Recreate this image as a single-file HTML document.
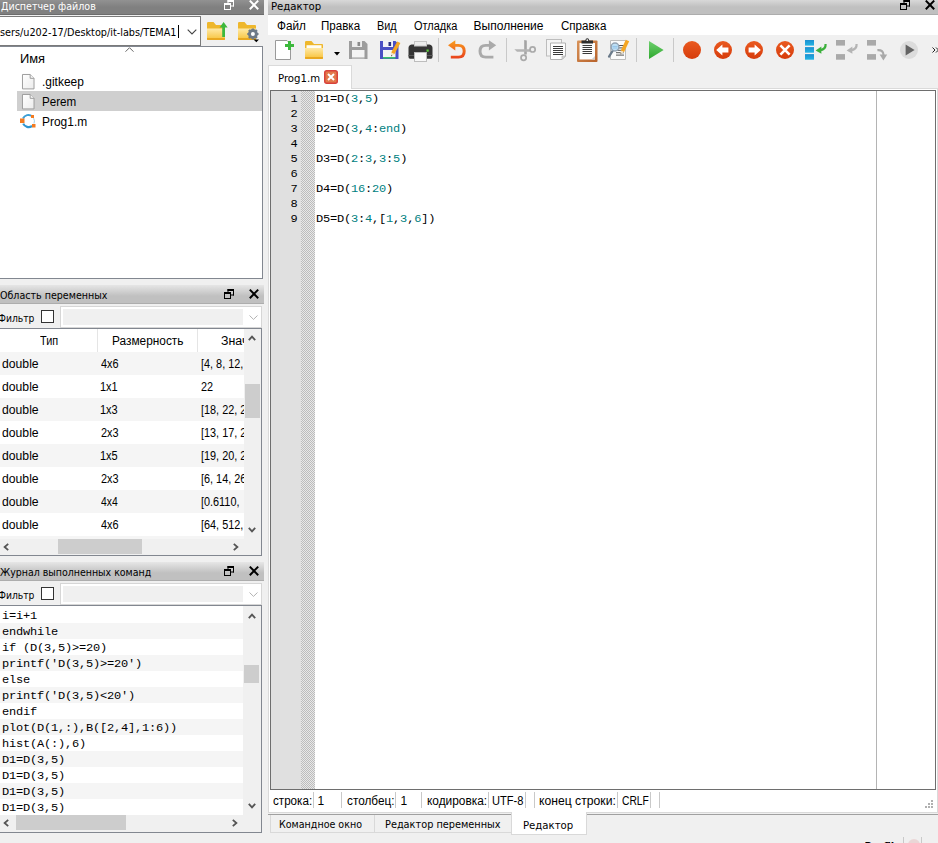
<!DOCTYPE html>
<html><head><meta charset="utf-8"><title>Octave</title>
<style>
*{box-sizing:border-box;margin:0;padding:0}
html,body{width:938px;height:843px;overflow:hidden;background:#f0f0f0}
body{position:relative;font-family:"DejaVu Sans Condensed","Liberation Sans",sans-serif;font-size:11px;color:#000}
.a{position:absolute}
.t{position:absolute;white-space:nowrap;line-height:15px;height:15px}
.s{position:absolute;white-space:nowrap;line-height:16px;height:16px;font-family:"Liberation Sans","DejaVu Sans",sans-serif;font-size:12px}
.m{position:absolute;white-space:pre;line-height:16px;height:16px;font-family:"Liberation Mono","DejaVu Sans Mono",monospace;font-size:12px;letter-spacing:-0.2px;transform:scaleY(0.84);transform-origin:0 11px}
.tbar{position:absolute;height:19px;background:linear-gradient(#e6e6e6 0,#c0c0c0 11px,#c0c0c0 18px,#adadad 18px)}
.tbar.act{background:linear-gradient(#9c9c9c 0,#808080 11px,#808080 18px,#6c6c6c 18px)}
.frame{position:absolute;border:1px solid #828790;background:#fff}
.n{color:#007f7f}
.sep{position:absolute;width:1px;background:#c9c9c9}
svg{position:absolute;overflow:visible}
</style></head><body>

<div class="tbar act" style="left:0;top:-4px;width:264px"></div>
<div class="t" style="left:0.70px;top:-1px;transform:scaleX(0.9622);transform-origin:0 0;color:#fff;">Диспетчер файлов</div>
<svg style="left:224px;top:0px" width="10" height="10" viewBox="0 0 10 10"><g fill="#fff"><rect x="3.5" y="0" width="6.5" height="2"/><rect x="9" y="0" width="1" height="6.5"/><rect x="7" y="5.5" width="3" height="1"/><rect x="3.5" y="0" width="1" height="3"/><rect x="0" y="3" width="7" height="2"/><rect x="0" y="3" width="1" height="7"/><rect x="6" y="3" width="1" height="7"/><rect x="0" y="9" width="7" height="1"/></g></svg>
<svg style="left:249px;top:0px" width="10" height="10" viewBox="0 0 10 10"><path d="M0.8 0.6L9.2 9.2M9.2 0.6L0.8 9.2" fill="none" stroke="#fff" stroke-width="2"/></svg>
<div class="frame" style="left:-2px;top:16px;width:203px;height:30px;border-color:#7a7a7a"></div>
<div class="t" style="left:0.30px;top:25px;transform:scaleX(0.9789);transform-origin:0 0;">sers/u202-17/Desktop/it-labs/TEMA1</div>
<div class="a" style="left:178px;top:25px;width:1px;height:13px;background:#000"></div>
<svg style="left:187px;top:29px" width="10" height="6" viewBox="0 0 10 6"><path d="M0.7 0.7L5 5L9.3 0.7" fill="none" stroke="#444" stroke-width="1.1"/></svg>
<div class="frame" style="left:-1px;top:46px;width:264px;height:233px"></div>
<svg style="left:125px;top:47px" width="9" height="5" viewBox="0 0 9 5"><path d="M0.5 4.7L4.5 0.7L8.5 4.7" fill="none" stroke="#666" stroke-width="1"/></svg>
<div class="s" style="left:20.13px;top:51px;transform:scaleX(1.0727);transform-origin:0 0;">Имя</div>
<div class="a" style="left:17px;top:91px;width:245px;height:20px;background:#cfcfcf"></div>
<svg style="left:22px;top:73.6px" width="12.5" height="15.4" viewBox="0 0 13 16"><defs><linearGradient id="fg1" x1="0" y1="0" x2="1" y2="1"><stop offset="0" stop-color="#fff"/><stop offset="1" stop-color="#ececec"/></linearGradient></defs><path d="M0.5 0.5H8.5L12.5 4.5V15.5H0.5Z" fill="url(#fg1)" stroke="#9b9b9b"/><path d="M8.5 0.5V4.5H12.5" fill="#f4f4f4" stroke="#9b9b9b"/></svg>
<svg style="left:22px;top:93.6px" width="12.5" height="15.4" viewBox="0 0 13 16"><defs><linearGradient id="fg2" x1="0" y1="0" x2="1" y2="1"><stop offset="0" stop-color="#fff"/><stop offset="1" stop-color="#ececec"/></linearGradient></defs><path d="M0.5 0.5H8.5L12.5 4.5V15.5H0.5Z" fill="url(#fg2)" stroke="#9b9b9b"/><path d="M8.5 0.5V4.5H12.5" fill="#f4f4f4" stroke="#9b9b9b"/></svg>
<svg style="left:20px;top:113px" width="16" height="16" viewBox="0 0 16 16"><path d="M12.2 3.2A6 6 0 0 0 3 5.5" fill="none" stroke="#3b9fd6" stroke-width="2"/><path d="M3.2 10.6A6 6 0 0 0 12 13" fill="none" stroke="#2f96d0" stroke-width="2.2"/><path d="M13.6 5.2A6 6 0 0 1 14 10.5" fill="none" stroke="#9fd0ea" stroke-width="1"/><rect x="0" y="5.5" width="4.5" height="4.5" fill="#f47b20"/><rect x="11" y="2" width="3" height="3" fill="#f47b20"/><rect x="12" y="11" width="3.5" height="3.5" fill="#f47b20"/></svg>
<div class="s" style="left:41.60px;top:74px;transform:scaleX(0.9951);transform-origin:0 0;">.gitkeep</div>
<div class="s" style="left:41.63px;top:94px;transform:scaleX(0.9706);transform-origin:0 0;">Perem</div>
<div class="s" style="left:41.60px;top:114px;transform:scaleX(0.9955);transform-origin:0 0;">Prog1.m</div>
<svg style="left:207px;top:22px" width="22" height="18" viewBox="0 0 22 18"><defs><linearGradient id="fo" x1="0" y1="0" x2="0" y2="1"><stop offset="0" stop-color="#ffe9a6"/><stop offset="1" stop-color="#f8c94c"/></linearGradient></defs><path d="M0 1.2Q0 0 1.2 0H6.5L9 3H17Q18 3 18 4V17Q18 18 17 18H1Q0 18 0 17Z" fill="#eeb72c"/><path d="M0 6.5H18V16H0Z" fill="url(#fo)"/><path d="M0 16H18V17Q18 18 17 18H1Q0 18 0 17Z" fill="#e9a820"/><path d="M16.6 0L20.6 5.6H18V15H15.2V5.6H12.6Z" fill="#3db83d"/></svg>
<svg style="left:238px;top:22px" width="22" height="21" viewBox="0 0 22 21"><path d="M0 1.2Q0 0 1.2 0H6.5L9 3H17Q18 3 18 4V17Q18 18 17 18H1Q0 18 0 17Z" fill="#eeb72c"/><path d="M0 6.5H18V16H0Z" fill="url(#fo)"/><path d="M0 16H18V17Q18 18 17 18H1Q0 18 0 17Z" fill="#e9a820"/><g transform="translate(14.9,12)"><circle r="3.6" fill="none" stroke="#6d7987" stroke-width="2.6"/><g stroke="#6d7987" stroke-width="2.2"><path d="M0 -5.6V5.6M-5.6 0H5.6M-4 -4L4 4M-4 4L4 -4"/></g><circle r="2" fill="#fff"/></g><path d="M15.6 17.4H21L18.3 20.3Z" fill="#000"/></svg>
<div class="tbar" style="left:0;top:285px;width:264px"></div>
<div class="t" style="left:0.30px;top:287.6px;transform:scaleX(0.9622);transform-origin:0 0;">Область переменных</div>
<svg style="left:224px;top:289px" width="10" height="10" viewBox="0 0 10 10"><g fill="#000"><rect x="3.5" y="0" width="6.5" height="2"/><rect x="9" y="0" width="1" height="6.5"/><rect x="7" y="5.5" width="3" height="1"/><rect x="3.5" y="0" width="1" height="3"/><rect x="0" y="3" width="7" height="2"/><rect x="0" y="3" width="1" height="7"/><rect x="6" y="3" width="1" height="7"/><rect x="0" y="9" width="7" height="1"/></g></svg>
<svg style="left:249px;top:289px" width="10" height="10" viewBox="0 0 10 10"><path d="M0.8 0.6L9.2 9.2M9.2 0.6L0.8 9.2" fill="none" stroke="#000" stroke-width="2"/></svg>
<div class="t" style="left:-2.00px;top:311.4px;transform:scaleX(0.9308);transform-origin:0 0;">Фильтр</div>
<div class="a" style="left:41px;top:310px;width:13px;height:13px;border:1px solid #333;background:#fff"></div>
<div class="a" style="left:60px;top:306px;width:202px;height:22px;background:#fff;border:1px solid #d6d6d6"></div>
<div class="a" style="left:63px;top:309px;width:180px;height:16px;background:#f0f0f0"></div>
<svg style="left:249px;top:315px" width="9" height="5" viewBox="0 0 9 5"><path d="M0.5 0.5L4.5 4.4L8.5 0.5" fill="none" stroke="#b4b4b4" stroke-width="1"/></svg>
<div class="frame" style="left:-1px;top:328px;width:263px;height:228px"></div>
<div class="a" style="left:97px;top:329px;width:1px;height:23px;background:#e5e5e5"></div>
<div class="a" style="left:197px;top:329px;width:1px;height:23px;background:#e5e5e5"></div>
<div class="s" style="left:39.50px;top:333px;transform:scaleX(0.9050);transform-origin:0 0;">Тип</div>
<div class="s" style="left:111.61px;top:333px;transform:scaleX(0.9887);transform-origin:0 0;">Размерность</div>
<div class="a" style="left:198px;top:329px;width:46px;height:23px;overflow:hidden"><div class="s" style="left:22.5px;top:4px;transform:scaleX(1.03);transform-origin:0 0">Значение</div></div>
<div class="a" style="left:0;top:352px;width:244px;height:23px;background:#f5f5f5"></div>
<div class="s" style="left:1.60px;top:356px;transform:scaleX(1.0167);transform-origin:0 0;">double</div>
<div class="s" style="left:101.30px;top:356px;transform:scaleX(0.9105);transform-origin:0 0;">4x6</div>
<div class="a" style="left:198px;top:352px;width:46px;height:23px;overflow:hidden"><div class="s" style="left:2.9px;top:4px;transform:scaleX(0.905);transform-origin:0 0">[4, 8, 12, 16</div></div>
<div class="s" style="left:1.60px;top:379px;transform:scaleX(1.0167);transform-origin:0 0;">double</div>
<div class="s" style="left:100.38px;top:379px;transform:scaleX(0.9167);transform-origin:0 0;">1x1</div>
<div class="a" style="left:198px;top:375px;width:46px;height:23px;overflow:hidden"><div class="s" style="left:2.9px;top:4px;transform:scaleX(0.905);transform-origin:0 0">22</div></div>
<div class="a" style="left:0;top:398px;width:244px;height:23px;background:#f5f5f5"></div>
<div class="s" style="left:1.60px;top:402px;transform:scaleX(1.0167);transform-origin:0 0;">double</div>
<div class="s" style="left:100.38px;top:402px;transform:scaleX(0.9167);transform-origin:0 0;">1x3</div>
<div class="a" style="left:198px;top:398px;width:46px;height:23px;overflow:hidden"><div class="s" style="left:2.9px;top:4px;transform:scaleX(0.905);transform-origin:0 0">[18, 22, 26]</div></div>
<div class="s" style="left:1.60px;top:425px;transform:scaleX(1.0167);transform-origin:0 0;">double</div>
<div class="s" style="left:101.30px;top:425px;transform:scaleX(0.9105);transform-origin:0 0;">2x3</div>
<div class="a" style="left:198px;top:421px;width:46px;height:23px;overflow:hidden"><div class="s" style="left:2.9px;top:4px;transform:scaleX(0.905);transform-origin:0 0">[13, 17, 21</div></div>
<div class="a" style="left:0;top:444px;width:244px;height:23px;background:#f5f5f5"></div>
<div class="s" style="left:1.60px;top:448px;transform:scaleX(1.0167);transform-origin:0 0;">double</div>
<div class="s" style="left:100.38px;top:448px;transform:scaleX(0.9167);transform-origin:0 0;">1x5</div>
<div class="a" style="left:198px;top:444px;width:46px;height:23px;overflow:hidden"><div class="s" style="left:2.9px;top:4px;transform:scaleX(0.905);transform-origin:0 0">[19, 20, 21</div></div>
<div class="s" style="left:1.60px;top:471px;transform:scaleX(1.0167);transform-origin:0 0;">double</div>
<div class="s" style="left:101.30px;top:471px;transform:scaleX(0.9105);transform-origin:0 0;">2x3</div>
<div class="a" style="left:198px;top:467px;width:46px;height:23px;overflow:hidden"><div class="s" style="left:2.9px;top:4px;transform:scaleX(0.905);transform-origin:0 0">[6, 14, 26</div></div>
<div class="a" style="left:0;top:490px;width:244px;height:23px;background:#f5f5f5"></div>
<div class="s" style="left:1.60px;top:494px;transform:scaleX(1.0167);transform-origin:0 0;">double</div>
<div class="s" style="left:101.30px;top:494px;transform:scaleX(0.8650);transform-origin:0 0;">4x4</div>
<div class="a" style="left:198px;top:490px;width:46px;height:23px;overflow:hidden"><div class="s" style="left:2.9px;top:4px;transform:scaleX(0.905);transform-origin:0 0">[0.6110,</div></div>
<div class="s" style="left:1.60px;top:517px;transform:scaleX(1.0167);transform-origin:0 0;">double</div>
<div class="s" style="left:101.30px;top:517px;transform:scaleX(0.9105);transform-origin:0 0;">4x6</div>
<div class="a" style="left:198px;top:513px;width:46px;height:23px;overflow:hidden"><div class="s" style="left:2.9px;top:4px;transform:scaleX(0.905);transform-origin:0 0">[64, 512,</div></div>
<div class="a" style="left:244px;top:329px;width:17px;height:210px;background:#f0f0f0"></div>
<div class="a" style="left:245px;top:384px;width:15px;height:34px;background:#cdcdcd"></div>
<svg style="left:248px;top:335px" width="8" height="6" viewBox="0 0 8 6"><path d="M0.8 5.2L4 1.6L7.2 5.2" fill="none" stroke="#555" stroke-width="1.8"/></svg>
<svg style="left:248px;top:527px" width="8" height="6" viewBox="0 0 8 6"><path d="M0.8 0.8L4 4.4L7.2 0.8" fill="none" stroke="#555" stroke-width="1.8"/></svg>
<div class="a" style="left:0;top:536px;width:244px;height:3px;background:#f5f5f5"></div><div class="a" style="left:0;top:539px;width:261px;height:16px;background:#f0f0f0"></div>
<div class="a" style="left:58px;top:539px;width:84px;height:15px;background:#cdcdcd"></div>
<svg style="left:3px;top:543px" width="6" height="8" viewBox="0 0 6 8"><path d="M5.2 0.8L1.6 4L5.2 7.2" fill="none" stroke="#555" stroke-width="1.8"/></svg>
<svg style="left:233px;top:543px" width="6" height="8" viewBox="0 0 6 8"><path d="M0.8 0.8L4.4 4L0.8 7.2" fill="none" stroke="#555" stroke-width="1.8"/></svg>
<div class="tbar" style="left:0;top:562px;width:264px"></div>
<div class="t" style="left:0.30px;top:564.6px;transform:scaleX(0.9541);transform-origin:0 0;">Журнал выполненных команд</div>
<svg style="left:224px;top:566px" width="10" height="10" viewBox="0 0 10 10"><g fill="#000"><rect x="3.5" y="0" width="6.5" height="2"/><rect x="9" y="0" width="1" height="6.5"/><rect x="7" y="5.5" width="3" height="1"/><rect x="3.5" y="0" width="1" height="3"/><rect x="0" y="3" width="7" height="2"/><rect x="0" y="3" width="1" height="7"/><rect x="6" y="3" width="1" height="7"/><rect x="0" y="9" width="7" height="1"/></g></svg>
<svg style="left:249px;top:566px" width="10" height="10" viewBox="0 0 10 10"><path d="M0.8 0.6L9.2 9.2M9.2 0.6L0.8 9.2" fill="none" stroke="#000" stroke-width="2"/></svg>
<div class="t" style="left:-2.00px;top:588.4px;transform:scaleX(0.9308);transform-origin:0 0;">Фильтр</div>
<div class="a" style="left:41px;top:587px;width:13px;height:13px;border:1px solid #333;background:#fff"></div>
<div class="a" style="left:60px;top:583px;width:202px;height:22px;background:#fff;border:1px solid #d6d6d6"></div>
<div class="a" style="left:63px;top:586px;width:180px;height:16px;background:#f0f0f0"></div>
<svg style="left:249px;top:592px" width="9" height="5" viewBox="0 0 9 5"><path d="M0.5 0.5L4.5 4.4L8.5 0.5" fill="none" stroke="#b4b4b4" stroke-width="1"/></svg>
<div class="frame" style="left:-1px;top:605px;width:263px;height:228px"></div>
<div class="m" style="left:2px;top:608px;">i=i+1</div>
<div class="a" style="left:0;top:623px;width:243px;height:16px;background:#f5f5f5"></div>
<div class="m" style="left:2px;top:624px;">endwhile</div>
<div class="m" style="left:2px;top:640px;">if (D(3,5)&gt;=20)</div>
<div class="a" style="left:0;top:655px;width:243px;height:16px;background:#f5f5f5"></div>
<div class="m" style="left:2px;top:656px;">printf('D(3,5)&gt;=20')</div>
<div class="m" style="left:2px;top:672px;">else</div>
<div class="a" style="left:0;top:687px;width:243px;height:16px;background:#f5f5f5"></div>
<div class="m" style="left:2px;top:688px;">printf('D(3,5)&lt;20')</div>
<div class="m" style="left:2px;top:704px;">endif</div>
<div class="a" style="left:0;top:719px;width:243px;height:16px;background:#f5f5f5"></div>
<div class="m" style="left:2px;top:720px;">plot(D(1,:),B([2,4],1:6))</div>
<div class="m" style="left:2px;top:736px;">hist(A(:),6)</div>
<div class="a" style="left:0;top:751px;width:243px;height:16px;background:#f5f5f5"></div>
<div class="m" style="left:2px;top:752px;">D1=D(3,5)</div>
<div class="m" style="left:2px;top:768px;">D1=D(3,5)</div>
<div class="a" style="left:0;top:783px;width:243px;height:16px;background:#f5f5f5"></div>
<div class="m" style="left:2px;top:784px;">D1=D(3,5)</div>
<div class="m" style="left:2px;top:800px;">D1=D(3,5)</div>
<div class="a" style="left:243px;top:606px;width:18px;height:209px;background:#f0f0f0"></div>
<div class="a" style="left:244px;top:665px;width:15px;height:18px;background:#cdcdcd"></div>
<svg style="left:248px;top:613px" width="8" height="6" viewBox="0 0 8 6"><path d="M0.8 5.2L4 1.6L7.2 5.2" fill="none" stroke="#555" stroke-width="1.8"/></svg>
<svg style="left:248px;top:803px" width="8" height="6" viewBox="0 0 8 6"><path d="M0.8 0.8L4 4.4L7.2 0.8" fill="none" stroke="#555" stroke-width="1.8"/></svg>
<div class="a" style="left:0;top:815px;width:261px;height:17px;background:#f0f0f0"></div>
<div class="a" style="left:16px;top:815px;width:110px;height:15px;background:#cdcdcd"></div>
<svg style="left:3px;top:819px" width="6" height="8" viewBox="0 0 6 8"><path d="M5.2 0.8L1.6 4L5.2 7.2" fill="none" stroke="#555" stroke-width="1.8"/></svg>
<svg style="left:232px;top:819px" width="6" height="8" viewBox="0 0 6 8"><path d="M0.8 0.8L4.4 4L0.8 7.2" fill="none" stroke="#555" stroke-width="1.8"/></svg>
<div class="tbar" style="left:268px;top:-4px;width:670px"></div>
<div class="t" style="left:271.38px;top:-1px;transform:scaleX(1.0250);transform-origin:0 0;">Редактор</div>
<svg style="left:900px;top:0px" width="10" height="10" viewBox="0 0 10 10"><g fill="#000"><rect x="3.5" y="0" width="6.5" height="2"/><rect x="9" y="0" width="1" height="6.5"/><rect x="7" y="5.5" width="3" height="1"/><rect x="3.5" y="0" width="1" height="3"/><rect x="0" y="3" width="7" height="2"/><rect x="0" y="3" width="1" height="7"/><rect x="6" y="3" width="1" height="7"/><rect x="0" y="9" width="7" height="1"/></g></svg>
<svg style="left:925px;top:0px" width="10" height="10" viewBox="0 0 10 10"><path d="M0.8 0.6L9.2 9.2M9.2 0.6L0.8 9.2" fill="none" stroke="#000" stroke-width="2"/></svg>
<div class="a" style="left:268px;top:15px;width:670px;height:20px;background:#fff"></div>
<div class="s" style="left:276.60px;top:18px;transform:scaleX(0.9793);transform-origin:0 0;">Файл</div>
<div class="s" style="left:320.84px;top:18px;transform:scaleX(0.9650);transform-origin:0 0;">Правка</div>
<div class="s" style="left:377.10px;top:18px;transform:scaleX(0.9048);transform-origin:0 0;">Вид</div>
<div class="s" style="left:413.70px;top:18px;transform:scaleX(0.9146);transform-origin:0 0;">Отладка</div>
<div class="s" style="left:473.60px;top:18px;">Выполнение</div>
<div class="s" style="left:560.60px;top:18px;transform:scaleX(0.9638);transform-origin:0 0;">Справка</div>
<svg style="left:275px;top:40px" width="20" height="20" viewBox="0 0 20 20"><path d="M0.5 0.5H12L15.5 4V19.5H0.5Z" fill="#fff" stroke="#9a9a9a"/><path d="M14.5 1V10M10 5.5H19" stroke="#3cb83c" stroke-width="3" fill="none"/></svg>
<svg style="left:305px;top:41px" width="18" height="18" viewBox="0 0 18 18"><defs><linearGradient id="fo2" x1="0" y1="0" x2="0" y2="1"><stop offset="0" stop-color="#ffe9a6"/><stop offset="1" stop-color="#f9c84a"/></linearGradient></defs><path d="M0 1.2Q0 0 1.2 0H6.5L9 3H17Q18 3 18 4V17Q18 18 17 18H1Q0 18 0 17Z" fill="#eeb72c"/><path d="M1.5 4.2H16.5V7.5H1.5Z" fill="#fffdf4"/><path d="M0 7H18V16H0Z" fill="url(#fo2)"/><path d="M0 16H18V17Q18 18 17 18H1Q0 18 0 17Z" fill="#e9a820"/></svg>
<svg style="left:334px;top:52px" width="6" height="4" viewBox="0 0 6 4"><path d="M0 0H6L3 3.6Z" fill="#000"/></svg>
<svg style="left:349px;top:41px" width="19" height="18" viewBox="0 0 19 18"><path d="M0 0H15.5L18.5 3V18H0Z" fill="#9c9c9c"/><rect x="3" y="0" width="10" height="6" fill="#ededed"/><rect x="8.5" y="1" width="2.6" height="4" fill="#8a8a8a"/><rect x="3" y="9" width="12.5" height="7" fill="#f4f4f4"/><rect x="3" y="16" width="12.5" height="1.6" fill="#c8c8c8"/></svg>
<svg style="left:380px;top:41px" width="19" height="18" viewBox="0 0 19 18"><path d="M0 0H15.5L18.5 3V18H0Z" fill="#4a4fc4"/><rect x="3" y="0" width="10" height="6" fill="#f2f2f8"/><rect x="8.5" y="1" width="2.6" height="4" fill="#2a2f80"/><rect x="3" y="9" width="12.5" height="7" fill="#f4f4f4"/><rect x="3" y="16" width="12.5" height="1.6" fill="#3cc06c"/></svg>
<svg style="left:389px;top:41px" width="12" height="16" viewBox="0 0 12 16"><path d="M8.2 0.5L11.4 2L5.3 13.2L2.2 11.6Z" fill="#f5a623"/><path d="M2.2 11.6L5.3 13.2L2 15.4Z" fill="#f0e0c0"/><path d="M2.4 14L3.4 14.5L2 15.4Z" fill="#333"/></svg>
<svg style="left:408px;top:41px" width="25" height="21" viewBox="0 0 25 21"><rect x="6.5" y="0.5" width="12" height="6" fill="#ececec" stroke="#c4c4c4"/><path d="M3.5 3.5L5 3.5H20L21.5 3.5Q24.5 4 24.5 7V16Q24.5 17.7 23 17.7H2Q0.5 17.7 0.5 16V7Q0.5 4 3.5 3.5Z" fill="#353535"/><rect x="6.5" y="0.5" width="12" height="4.5" fill="#ececec" stroke="#c4c4c4"/><rect x="0.5" y="14" width="24" height="1" fill="#5a5a5a"/><rect x="6.5" y="11.5" width="12" height="9" fill="#f8f8f8" stroke="#bdbdbd"/><rect x="18.5" y="8.5" width="2.2" height="2.2" fill="#5fd23c"/></svg>
<div class="sep" style="left:438px;top:38px;height:24px"></div>
<svg style="left:448px;top:40px" width="19" height="19" viewBox="0 0 19 19"><defs><linearGradient id="un" x1="0" y1="0" x2="0" y2="1"><stop offset="0" stop-color="#f9a01e"/><stop offset="1" stop-color="#e8401c"/></linearGradient></defs><path d="M0 5.3L7.3 0.3V3.9H10.5Q17.7 3.9 17.7 11Q17.7 18.6 10.5 18.6H2.8V15.8H10.3Q14.7 15.8 14.7 11.2Q14.7 6.8 10.3 6.8H7.3V10.4Z" fill="url(#un)"/></svg>
<svg style="left:478px;top:40px" width="19" height="19" viewBox="0 0 19 19"><g transform="translate(18.2,0) scale(-1,1)"><path d="M0 5.3L7.3 0.3V3.9H10.5Q17.7 3.9 17.7 11Q17.7 18.6 10.5 18.6H2.8V15.8H10.3Q14.7 15.8 14.7 11.2Q14.7 6.8 10.3 6.8H7.3V10.4Z" fill="#aaa"/></g></svg>
<div class="sep" style="left:506px;top:38px;height:24px"></div>
<svg style="left:514px;top:40px" width="23" height="22" viewBox="0 0 23 22"><path d="M10.2 0L12.8 0.5V14.5H10.2Z" fill="#a4a4a4"/><path d="M0.3 9.2H16V11.8H3Z" fill="#b4b4b4"/><circle cx="18.6" cy="9.4" r="2.6" fill="none" stroke="#aaa" stroke-width="1.7"/><circle cx="9.6" cy="17.8" r="2.6" fill="none" stroke="#aaa" stroke-width="1.7"/></svg>
<svg style="left:546px;top:39px" width="21" height="21" viewBox="0 0 21 21"><rect x="0.5" y="0.5" width="15" height="16.5" fill="#f4f4f4" stroke="#bdbdbd"/><path d="M4.5 4H19.5V17L16 20.5H4.5Z" fill="#fdfdfd" stroke="#b0b0b0"/><path d="M19.5 17H16V20.5Z" fill="#d8d8d8" stroke="#b0b0b0" stroke-width="0.6"/><rect x="7" y="7.0" width="10" height="1" fill="#3a3a3a"/><rect x="7" y="9.0" width="10" height="1" fill="#3a3a3a"/><rect x="7" y="11.0" width="10" height="1" fill="#3a3a3a"/><rect x="7" y="13.0" width="10" height="1" fill="#3a3a3a"/><rect x="7" y="15.0" width="10" height="1" fill="#3a3a3a"/></svg>
<svg style="left:577px;top:38px" width="21" height="24" viewBox="0 0 21 24"><defs><linearGradient id="pa" x1="0" y1="0" x2="1" y2="1"><stop offset="0" stop-color="#d8935a"/><stop offset="1" stop-color="#b8622a"/></linearGradient></defs><rect x="0" y="2.5" width="20.5" height="21.5" rx="1" fill="url(#pa)"/><rect x="2.5" y="5" width="15.5" height="16.5" fill="#fcfcfc"/><path d="M18 18V21.5H14.5Z" fill="#cfcfcf"/><path d="M4.5 2.6H8.3Q8.6 0.2 10.3 0.2Q12 0.2 12.3 2.6H16V5.4H4.5Z" fill="#2e2e2e"/><circle cx="10.3" cy="2.2" r="0.9" fill="#eee"/><rect x="5.5" y="7.0" width="9.5" height="1" fill="#3a3a3a"/><rect x="5.5" y="9.0" width="9.5" height="1" fill="#3a3a3a"/><rect x="5.5" y="11.0" width="9.5" height="1" fill="#3a3a3a"/><rect x="5.5" y="13.0" width="9.5" height="1" fill="#3a3a3a"/><rect x="5.5" y="15.0" width="9.5" height="1" fill="#3a3a3a"/></svg>
<svg style="left:608px;top:39px" width="22" height="22" viewBox="0 0 22 22"><path d="M2.5 1.5H17.5V20.5H2.5Z" fill="#fbfbfb" stroke="#bcbcbc"/><rect x="8" y="6.0" width="8" height="1" fill="#555"/><rect x="8" y="8.4" width="8" height="1" fill="#555"/><rect x="8" y="10.8" width="8" height="1" fill="#555"/><rect x="8" y="13.2" width="8" height="1" fill="#555"/><rect x="8" y="15.6" width="8" height="1" fill="#555"/><path d="M17.8 0.8L21.2 2.3L16 13.2L12.8 11.6Z" fill="#f5a623"/><path d="M12.8 11.6L16 13.2L12.4 15.6Z" fill="#efe0c4"/><path d="M12.6 14.2L13.6 14.8L12.4 15.6Z" fill="#333"/><path d="M4.8 11.6L1 17.6" stroke="#6a7a8a" stroke-width="2.2" stroke-linecap="round"/><circle cx="7" cy="8" r="3.9" fill="#bfe0f6" stroke="#93a3b3" stroke-width="1.5"/><path d="M4.4 7.4H9.6M4.6 9H9.4" stroke="#8fc0e6" stroke-width="0.9"/></svg>
<div class="sep" style="left:636px;top:38px;height:24px"></div>
<svg style="left:649px;top:41px" width="15" height="18" viewBox="0 0 15 18"><defs><linearGradient id="rn" x1="0" y1="0" x2="0" y2="1"><stop offset="0" stop-color="#6ed06e"/><stop offset="1" stop-color="#2ea82e"/></linearGradient></defs><path d="M0 0L14.6 9L0 18Z" fill="url(#rn)"/></svg>
<div class="sep" style="left:673px;top:38px;height:24px"></div>
<svg style="left:683px;top:41px" width="18" height="18" viewBox="0 0 18 18"><defs><linearGradient id="or" x1="0" y1="0" x2="0" y2="1"><stop offset="0" stop-color="#ea5a20"/><stop offset="1" stop-color="#d63c0c"/></linearGradient></defs><circle cx="9" cy="9" r="9" fill="url(#or)"/></svg>
<svg style="left:714px;top:41px" width="18" height="18" viewBox="0 0 18 18"><circle cx="9" cy="9" r="9" fill="url(#or)"/><path d="M2.2 9L8.4 3.6V6.6H14.4V11.4H8.4V14.4Z" fill="#fff"/></svg>
<svg style="left:745px;top:41px" width="18" height="18" viewBox="0 0 18 18"><circle cx="9" cy="9" r="9" fill="url(#or)"/><path d="M15.8 9L9.6 3.6V6.6H3.6V11.4H9.6V14.4Z" fill="#fff"/></svg>
<svg style="left:776px;top:41px" width="18" height="18" viewBox="0 0 18 18"><circle cx="9" cy="9" r="9" fill="url(#or)"/><path d="M4.4 4.4L13.6 13.6M13.6 4.4L4.4 13.6" stroke="#fff" stroke-width="2.6" fill="none"/></svg>
<svg style="left:805px;top:40px" width="23" height="20" viewBox="0 0 23 20"><defs><linearGradient id="bl" x1="0" y1="0" x2="0" y2="1"><stop offset="0" stop-color="#1c8fd0"/><stop offset="1" stop-color="#22b4e4"/></linearGradient></defs><rect x="0" y="0" width="9" height="5.6" fill="url(#bl)"/><rect x="0" y="7.1" width="9" height="5.6" fill="url(#bl)"/><rect x="0" y="14.1" width="9" height="5.6" fill="url(#bl)"/><path d="M20.6 4Q21 9.6 14.6 10.2" fill="none" stroke="#3cb03c" stroke-width="2.2"/><path d="M10.6 10.4L16.4 6.6V13.8Z" fill="#3cb03c"/></svg>
<svg style="left:836px;top:40px" width="23" height="20" viewBox="0 0 23 20"><rect x="0" y="0" width="9" height="5.6" fill="#a9a9a9"/><rect x="0" y="14.1" width="9" height="5.6" fill="#a9a9a9"/><path d="M20.6 4Q21 9.6 14.6 10.2" fill="none" stroke="#b4b4b4" stroke-width="2.2"/><path d="M10.6 10.4L16.4 6.6V13.8Z" fill="#b4b4b4"/></svg>
<svg style="left:867px;top:40px" width="21" height="21" viewBox="0 0 21 21"><rect x="0" y="0" width="9" height="5.6" fill="#a9a9a9"/><rect x="0" y="14.1" width="9" height="5.6" fill="#a9a9a9"/><path d="M10.4 10.2Q16.4 9.6 16.6 15.4" fill="none" stroke="#a9a9a9" stroke-width="2.2"/><path d="M12.6 14.6H20.2L16.4 20.4Z" fill="#a9a9a9"/></svg>
<svg style="left:900px;top:41px" width="18" height="18" viewBox="0 0 18 18"><circle cx="9" cy="9" r="9" fill="#dcdcdc"/><path d="M5.6 3.6L14.6 9L5.6 14.4Z" fill="#646464"/></svg>
<svg style="left:932px;top:47px" width="8" height="6" viewBox="0 0 8 6"><path d="M0.5 0.5L3 3L0.5 5.5M4 0.5L6.5 3L4 5.5" fill="none" stroke="#222" stroke-width="1"/></svg>
<div class="a" style="left:268px;top:88px;width:670px;height:725px;background:#fff;border:1px solid #dadada"></div>
<div class="a" style="left:268px;top:65px;width:84px;height:24px;background:#fff;border:1px solid #dadada;border-bottom:none"></div>
<div class="t" style="left:278.37px;top:71px;transform:scaleX(1.0256);transform-origin:0 0;">Prog1.m</div>
<svg style="left:324px;top:70px" width="14" height="14" viewBox="0 0 14 14"><rect x="0.75" y="0.75" width="12.5" height="12.5" rx="2" fill="#e2794b" stroke="#d8413a" stroke-width="1.5"/><path d="M4 4L10 10M10 4L4 10" stroke="#fff" stroke-width="2" fill="none"/></svg>
<div class="a" style="left:270px;top:90px;width:666px;height:700px;background:#fff;border:1px solid #6e6e6e"></div>
<div class="a" style="left:271px;top:91px;width:30px;height:698px;background:#e0e0e0"></div>
<div class="a" style="left:301px;top:91px;width:14px;height:698px;background:#bcbcbc;background-image:linear-gradient(45deg,#e8e8e8 25%,transparent 25%,transparent 75%,#e8e8e8 75%),linear-gradient(45deg,#e8e8e8 25%,transparent 25%,transparent 75%,#e8e8e8 75%);background-size:2px 2px;background-position:0 0,1px 1px"></div>
<div class="a" style="left:876px;top:91px;width:1px;height:698px;background:#b4b4b4"></div>
<div class="m" style="left:271px;top:91px;width:26.5px;text-align:right">1</div>
<div class="m" style="left:316px;top:91px;">D1=D(<span class="n">3</span>,<span class="n">5</span>)</div>
<div class="m" style="left:271px;top:106px;width:26.5px;text-align:right">2</div>
<div class="m" style="left:271px;top:121px;width:26.5px;text-align:right">3</div>
<div class="m" style="left:316px;top:121px;">D2=D(<span class="n">3</span>,<span class="n">4</span>:<span class="n">end</span>)</div>
<div class="m" style="left:271px;top:136px;width:26.5px;text-align:right">4</div>
<div class="m" style="left:271px;top:151px;width:26.5px;text-align:right">5</div>
<div class="m" style="left:316px;top:151px;">D3=D(<span class="n">2</span>:<span class="n">3</span>,<span class="n">3</span>:<span class="n">5</span>)</div>
<div class="m" style="left:271px;top:166px;width:26.5px;text-align:right">6</div>
<div class="m" style="left:271px;top:181px;width:26.5px;text-align:right">7</div>
<div class="m" style="left:316px;top:181px;">D4=D(<span class="n">16</span>:<span class="n">20</span>)</div>
<div class="m" style="left:271px;top:196px;width:26.5px;text-align:right">8</div>
<div class="m" style="left:271px;top:211px;width:26.5px;text-align:right">9</div>
<div class="m" style="left:316px;top:211px;">D5=D(<span class="n">3</span>:<span class="n">4</span>,[<span class="n">1</span>,<span class="n">3</span>,<span class="n">6</span>])</div>
<div class="sep" style="left:313px;top:792px;height:16px"></div>
<div class="sep" style="left:341px;top:792px;height:16px"></div>
<div class="sep" style="left:395px;top:792px;height:16px"></div>
<div class="sep" style="left:421px;top:792px;height:16px"></div>
<div class="sep" style="left:488px;top:792px;height:16px"></div>
<div class="sep" style="left:525px;top:792px;height:16px"></div>
<div class="sep" style="left:534px;top:792px;height:16px"></div>
<div class="sep" style="left:617px;top:792px;height:16px"></div>
<div class="sep" style="left:650px;top:792px;height:16px"></div>
<div class="sep" style="left:659px;top:792px;height:16px"></div>
<div class="s" style="left:272.50px;top:793px;transform:scaleX(0.9700);transform-origin:0 0;">строка:</div>
<div class="s" style="left:317.60px;top:793px;">1</div>
<div class="s" style="left:346.60px;top:793px;transform:scaleX(0.9812);transform-origin:0 0;">столбец:</div>
<div class="s" style="left:400.40px;top:793px;">1</div>
<div class="s" style="left:426.90px;top:793px;transform:scaleX(0.9900);transform-origin:0 0;">кодировка:</div>
<div class="s" style="left:492.38px;top:793px;transform:scaleX(0.9242);transform-origin:0 0;">UTF-8</div>
<div class="s" style="left:539.30px;top:793px;transform:scaleX(1.0147);transform-origin:0 0;">конец строки:</div>
<div class="s" style="left:622.40px;top:793px;transform:scaleX(0.8581);transform-origin:0 0;">CRLF</div>
<svg style="left:925px;top:800px" width="8" height="8" viewBox="0 0 8 8"><g fill="#b0b0b0"><rect x="6" y="0" width="2" height="2"/><rect x="3" y="3" width="2" height="2"/><rect x="6" y="3" width="2" height="2"/><rect x="0" y="6" width="2" height="2"/><rect x="3" y="6" width="2" height="2"/><rect x="6" y="6" width="2" height="2"/></g></svg>
<div class="a" style="left:268px;top:814px;width:670px;height:1px;background:#a0a0a0"></div>
<div class="a" style="left:270px;top:815px;width:105px;height:18px;border:1px solid #d9d9d9;border-top:none;background:#f0f0f0"></div>
<div class="a" style="left:374px;top:815px;width:138px;height:18px;border:1px solid #d9d9d9;border-top:none;background:#f0f0f0"></div>
<div class="a" style="left:511px;top:812px;width:76px;height:23px;border:1px solid #d9d9d9;border-top:none;background:#fff"></div>
<div class="t" style="left:279.24px;top:817px;transform:scaleX(0.9624);transform-origin:0 0;">Командное окно</div>
<div class="t" style="left:385.01px;top:817px;transform:scaleX(0.9853);transform-origin:0 0;">Редактор переменных</div>
<div class="t" style="left:523.18px;top:818px;transform:scaleX(1.0250);transform-origin:0 0;">Редактор</div>
<div class="a" style="left:864.5px;top:838px;width:31px;height:14px;overflow:hidden"><div class="t" style="left:0;top:1px;font-weight:bold">Profiler</div></div>
<div class="sep" style="left:903px;top:837px;height:8px"></div><div class="sep" style="left:921px;top:837px;height:8px"></div>
<div class="a" style="left:908px;top:839px;width:12px;height:12px;border-radius:6px;background:#ead6d6"></div>
</body></html>
